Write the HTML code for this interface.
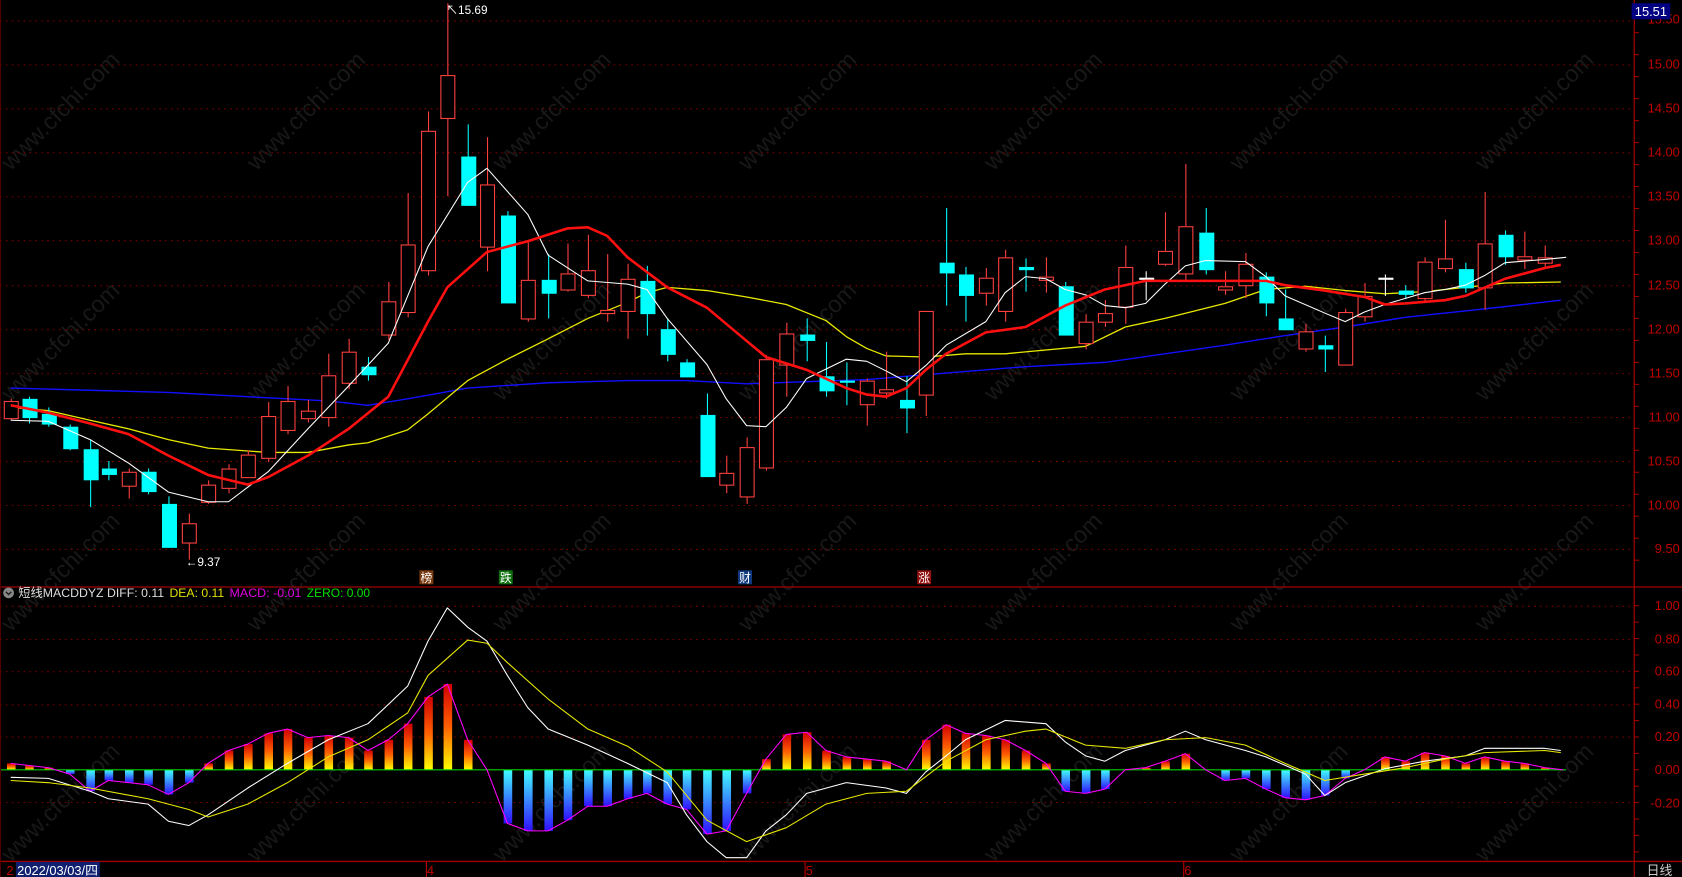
<!DOCTYPE html>
<html><head><meta charset="utf-8"><style>
html,body{margin:0;padding:0;background:#000;overflow:hidden}
svg{display:block}
text{font-family:"Liberation Sans","Noto Sans CJK SC",sans-serif}
</style></head><body>
<svg id="s" width="1682" height="877" viewBox="0 0 1568 818" preserveAspectRatio="none" xmlns="http://www.w3.org/2000/svg">
<defs>
<linearGradient id="gp" x1="0" y1="0" x2="0" y2="1"><stop offset="0" stop-color="#d00000"/><stop offset="0.5" stop-color="#ff6000"/><stop offset="1" stop-color="#ffff00"/></linearGradient>
<linearGradient id="gn" x1="0" y1="0" x2="0" y2="1"><stop offset="0" stop-color="#40ffff"/><stop offset="1" stop-color="#3010ff"/></linearGradient>
</defs>
<rect width="1568" height="818" fill="#000"/>
<g id="wm" fill="#181818" font-size="22"></g>
<g id="grid"></g>
<g id="main"></g>
<line x1="1523.5" y1="0" x2="1523.5" y2="818" stroke="#a00000" stroke-width="1.2"/>
<line x1="0" y1="547.5" x2="1568" y2="547.5" stroke="#a00000" stroke-width="1.2"/>
<line x1="0" y1="803.5" x2="1568" y2="803.5" stroke="#a00000" stroke-width="1.2"/>
<line x1="0.5" y1="0" x2="0.5" y2="818" stroke="#500000"/>
<g fill="#c00000" font-size="12" text-anchor="end">
<text x="1566" y="22">15.50</text>
<text x="1566" y="64">15.00</text>
<text x="1566" y="105">14.50</text>
<text x="1566" y="146">14.00</text>
<text x="1566" y="187">13.50</text>
<text x="1566" y="228">13.00</text>
<text x="1566" y="270">12.50</text>
<text x="1566" y="311">12.00</text>
<text x="1566" y="352">11.50</text>
<text x="1566" y="393">11.00</text>
<text x="1566" y="434">10.50</text>
<text x="1566" y="475">10.00</text>
<text x="1566" y="516">9.50</text>
<text x="1566" y="569">1.00</text>
<text x="1566" y="600">0.80</text>
<text x="1566" y="630">0.60</text>
<text x="1566" y="661">0.40</text>
<text x="1566" y="691">0.20</text>
<text x="1566" y="722">0.00</text>
<text x="1566" y="753">-0.20</text>
</g>
<rect x="1521" y="3" width="36" height="15" fill="#000080"/>
<text x="1524" y="15" fill="#fff" font-size="12">15.51</text>
<text x="416" y="13" fill="#fff" font-size="11">↖15.69</text>
<text x="173" y="528" fill="#fff" font-size="11">←9.37</text>
<g font-size="11" fill="#fff">
<rect x="391" y="532" width="13" height="13" fill="#7a3a10"/><text x="392" y="543">榜</text>
<rect x="465" y="532" width="13" height="13" fill="#107010"/><text x="466" y="543">跌</text>
<rect x="688" y="532" width="13" height="13" fill="#103a80"/><text x="689" y="543">财</text>
<rect x="855" y="532" width="13" height="13" fill="#901010"/><text x="856" y="543">涨</text>
</g>
<g font-size="11.5">
<circle cx="8" cy="553" r="5" fill="#888"/><path d="M5.5 552 L8 554.5 L10.5 552" stroke="#222" stroke-width="1.4" fill="none"/>
<text x="17" y="557" fill="#ddd" textLength="136" lengthAdjust="spacingAndGlyphs">短线MACDDYZ DIFF: 0.11</text>
<text x="158" y="557" fill="#e0e000" textLength="51" lengthAdjust="spacingAndGlyphs">DEA: 0.11</text>
<text x="214" y="557" fill="#e000e0" textLength="67" lengthAdjust="spacingAndGlyphs">MACD: -0.01</text>
<text x="286" y="557" fill="#00e000" textLength="59" lengthAdjust="spacingAndGlyphs">ZERO: 0.00</text>
</g>
<g fill="#c00000" font-size="12">
<text x="6" y="816">2</text><text x="398" y="816">4</text><text x="751" y="816">5</text><text x="1104" y="816">6</text>
</g>
<g stroke="#c00000"><line x1="397.5" y1="804" x2="397.5" y2="818"/><line x1="750.5" y1="804" x2="750.5" y2="818"/><line x1="1103.5" y1="804" x2="1103.5" y2="818"/></g>
<rect x="15" y="804" width="78" height="14" fill="#102070"/>
<text x="16" y="816" fill="#fff" font-size="12">2022/03/03/四</text>
<text x="1535" y="816" fill="#ccc" font-size="12">日线</text>
</svg>
<script>
var NS="http://www.w3.org/2000/svg",S=document.getElementById('s');
function el(p,t,a){var e=document.createElementNS(NS,t);for(var k in a)e.setAttribute(k,a[k]);p.appendChild(e);return e;}
var G=document.getElementById('grid'),M=document.getElementById('main'),W=document.getElementById('wm');
for(var i=0;i<7;i++)for(var j=0;j<4;j++){var t=el(W,'text',{x:0,y:0,transform:'translate('+(i*229+10)+','+(j*215+160)+') rotate(-45)'});t.textContent='www.cfchi.com';}
[19,60,101,142,183,224,266,307,348,389,430,471,512,565,596,626,657,687,748].forEach(function(y){el(G,'line',{x1:0,x2:1523,y1:y+.5,y2:y+.5,stroke:'#7a0000','stroke-dasharray':'1.5,4'});});
for(var y=10;y<540;y+=20.5)el(G,'line',{x1:1523,x2:1528,y1:y,y2:y,stroke:'#a00000'});
for(var y=565;y<800;y+=15.3)el(G,'line',{x1:1523,x2:1528,y1:y,y2:y,stroke:'#a00000'});
var C=[[10,374,390,372,392,'r'],[27,372,390,370,395,'c'],[45,386,396,380,398,'c'],[65,398,419,396,420,'c'],[84,419,448,410,473,'c'],[101,437,443,430,448,'c'],[120,440,453,437,465,'r'],[138,440,459,437,461,'c'],[157,470,511,463,511,'c'],[176,488,506,479,522,'r'],[194,452,468,448,470,'r'],[213,437,455,433,460,'r'],[231,424,445,420,445,'r'],[250,388,427,375,431,'r'],[268,374,401,360,405,'r'],[287,383,390,373,394,'r'],[306,350,389,330,398,'r'],[325,328,357,316,363,'r'],[343,342,350,333,355,'c'],[362,281,312,263,317,'r'],[380,228,291,180,296,'r'],[399,122,252,104,257,'r'],[417,70,110,3,183,'r'],[436,146,192,116,192,'c'],[454,172,230,128,253,'r'],[473,201,283,197,283,'c'],[492,261,297,226,300,'r'],[511,261,274,237,297,'c'],[529,255,270,227,272,'r'],[548,252,275,219,278,'r'],[566,289,292,237,300,'r'],[585,260,290,246,316,'r'],[603,262,293,248,313,'c'],[622,307,331,297,337,'c'],[640,338,352,335,352,'c'],[659,387,445,367,445,'c'],[677,441,452,425,460,'r'],[696,417,463,408,470,'r'],[714,335,436,331,439,'r'],[733,311,340,301,370,'r'],[752,312,318,297,337,'c'],[770,351,365,319,370,'c'],[789,355,357,338,378,'c'],[808,355,377,353,397,'r'],[826,363,366,328,372,'r'],[845,373,381,351,404,'c'],[863,290,368,290,388,'r'],[882,245,255,194,285,'c'],[900,256,276,249,300,'c'],[919,259,273,250,285,'r'],[937,240,290,233,300,'r'],[956,249,252,241,272,'c'],[975,258,261,240,273,'r'],[993,267,313,263,313,'c'],[1012,300,320,293,326,'r'],[1030,292,300,280,305,'r'],[1049,249,286,229,302,'r'],[1068,259,261,253,280,'w'],[1086,234,246,198,248,'r'],[1105,211,255,153,263,'r'],[1124,217,252,194,256,'c'],[1142,267,270,253,275,'r'],[1161,246,266,236,278,'r'],[1180,258,283,254,295,'c'],[1198,297,308,270,308,'c'],[1217,309,325,302,328,'r'],[1235,322,326,313,347,'c'],[1254,291,340,288,340,'r'],[1272,276,295,264,300,'r'],[1291,259,261,256,276,'w'],[1310,271,275,266,279,'c'],[1328,244,278,240,282,'r'],[1347,241,250,205,254,'r'],[1366,251,269,245,273,'c'],[1384,227,268,179,289,'r'],[1403,219,240,215,247,'c'],[1421,239,242,216,251,'r'],[1440,240,245,229,250,'r']];
function line(pts,col,w){el(M,'polyline',{points:pts.map(function(p){return p.join(',')}).join(' '),fill:'none',stroke:col,'stroke-width':w,'stroke-linejoin':'round'});}
line([[10,362],[84,364],[157,366],[231,370],[306,374],[343,378],[380,372],[436,362],[511,357],[585,355],[640,355],[696,358],[752,356],[808,354],[882,348],[956,342],[1030,338],[1086,330],[1142,322],[1198,313],[1254,305],[1310,296],[1366,290],[1403,286],[1455,280]],'#1010ff',1.3);
line([[10,380],[45,383],[84,392],[120,400],[157,410],[194,418],[250,422],[287,422],[325,415],[343,413],[380,401],[399,386],[436,355],[473,335],[511,316],[548,297],[585,282],[603,273],[622,268],[659,271],[696,277],[733,284],[770,299],[789,314],[808,325],[826,332],[863,333],[900,330],[937,330],[1012,323],[1049,305],[1086,297],[1142,283],[1180,270],[1217,267],[1254,271],[1291,274],[1328,272],[1366,268],[1403,264],[1455,263]],'#e8e800',1.2);
C.forEach(function(c){var col=c[5]=='r'?'#ff4040':(c[5]=='c'?'#00ffff':'#ffffff');
 if(c[5]=='r'){el(M,'line',{x1:c[0]+.5,x2:c[0]+.5,y1:c[3],y2:c[1],stroke:col});el(M,'line',{x1:c[0]+.5,x2:c[0]+.5,y1:c[2],y2:c[4],stroke:col});el(M,'rect',{x:c[0]-6,y:c[1]+.5,width:13,height:Math.max(c[2]-c[1],1),fill:'#000',stroke:col});}
 else{el(M,'line',{x1:c[0]+.5,x2:c[0]+.5,y1:c[3],y2:c[4],stroke:col});el(M,'rect',{x:c[0]-6,y:c[1],width:14,height:Math.max(c[2]-c[1],2),fill:col});}
});
line([[10,392],[45,393],[84,410],[120,432],[157,459],[194,468],[213,468],[250,440],[287,400],[325,360],[362,320],[399,230],[436,170],[454,157],[492,200],[511,238],[548,262],[585,265],[603,270],[622,297],[659,340],[677,372],[696,397],[714,398],[733,380],[752,353],[789,335],[808,337],[826,346],[845,356],[863,341],[882,322],[919,300],[937,273],[956,258],[975,260],[993,270],[1012,275],[1030,285],[1049,287],[1068,283],[1086,265],[1105,248],[1124,243],[1161,244],[1180,258],[1198,276],[1235,292],[1254,300],[1272,291],[1291,284],[1328,273],[1347,270],[1366,266],[1384,257],[1403,245],[1440,242],[1460,240]],'#ffffff',1);
line([[10,378],[45,385],[84,395],[120,405],[157,425],[194,443],[231,452],[250,445],[287,425],[325,400],[362,370],[399,300],[417,268],[454,235],[492,225],[529,213],[548,212],[566,220],[585,240],[622,268],[659,287],[696,318],[714,333],[752,345],[789,362],[808,368],[826,370],[845,362],[863,345],[882,330],[919,310],[956,305],[993,285],[1030,270],[1068,262],[1105,262],[1142,262],[1180,262],[1198,266],[1235,271],[1272,277],[1291,284],[1310,283],[1347,280],[1366,276],[1403,260],[1440,250],[1455,247]],'#ff1010',2.4);
var Z=718,B=[712,714,716,722,738,728,730,732,741,730,712,700,694,684,680,688,686,688,700,690,675,650,638,690,718,768,775,775,765,752,752,745,740,750,755,778,775,740,708,685,683,700,706,708,710,718,690,676,684,686,690,700,712,738,740,736,718,716,710,703,718,728,726,736,744,746,742,726,718,706,710,702,705,712,706,710,712,716];
var mp=[];
B.forEach(function(v,i){var x=C[i][0];mp.push([x,v]);
 if(v<Z)el(M,'rect',{x:x-3.5,y:v,width:8,height:Z-v,fill:'url(#gp)'});
 else if(v>Z)el(M,'rect',{x:x-3.5,y:Z,width:8,height:v-Z,fill:'url(#gn)'});});
mp.push([1457,718]);
el(M,'line',{x1:0,x2:1460,y1:Z,y2:Z,stroke:'#00d000','stroke-width':1.1});
line(mp,'#ff00ff',1);
line([[10,725],[45,726],[84,738],[101,745],[138,750],[157,766],[176,770],[194,760],[231,735],[268,712],[306,690],[343,675],[380,640],[399,598],[417,567],[436,585],[454,598],[473,630],[492,660],[511,680],[548,695],[585,712],[622,730],[640,760],[659,785],[677,800],[696,800],[714,775],[733,760],[752,740],[789,730],[826,735],[845,740],[863,720],[882,705],[900,690],[937,672],[975,675],[993,692],[1012,705],[1030,710],[1049,700],[1086,690],[1105,682],[1124,690],[1161,700],[1180,706],[1217,722],[1235,742],[1254,730],[1291,717],[1328,710],[1366,705],[1384,698],[1440,698],[1455,700]],'#ffffff',1);
line([[10,728],[45,730],[84,735],[138,745],[176,755],[194,762],[231,750],[268,730],[306,706],[343,690],[380,665],[399,630],[436,597],[454,600],[473,618],[511,652],[548,680],[585,696],[622,720],[659,765],[696,785],[733,772],[770,750],[808,740],[845,738],[882,710],[919,690],[956,682],[975,680],[1012,695],[1049,698],[1086,690],[1124,688],[1161,695],[1198,712],[1235,728],[1272,722],[1310,716],[1347,708],[1384,702],[1440,700],[1455,702]],'#e8e800',1);
</script>
</body></html>
